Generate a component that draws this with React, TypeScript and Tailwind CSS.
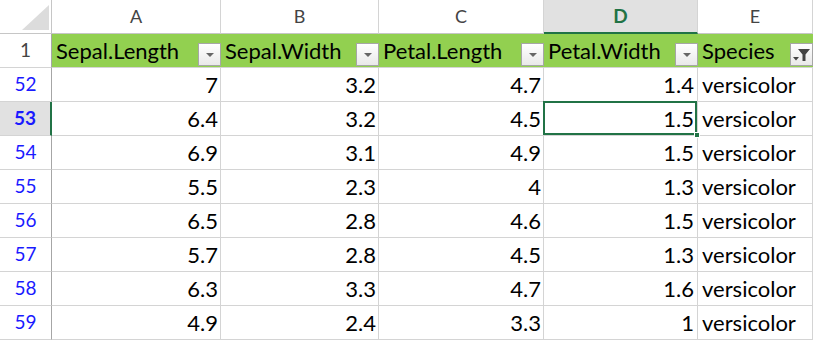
import React from "react";

const rows: [number, string, string, string, string][] = [
  [52, "7", "3.2", "4.7", "1.4"],
  [53, "6.4", "3.2", "4.5", "1.5"],
  [54, "6.9", "3.1", "4.9", "1.5"],
  [55, "5.5", "2.3", "4", "1.3"],
  [56, "6.5", "2.8", "4.6", "1.5"],
  [57, "5.7", "2.8", "4.5", "1.3"],
  [58, "6.3", "3.3", "4.7", "1.6"],
  [59, "4.9", "2.4", "3.3", "1"],
];

const headers = ["Sepal.Length", "Sepal.Width", "Petal.Length", "Petal.Width", "Species"];

function DropBtn({ filter }: { filter?: boolean }) {
  return (
    <div className="absolute right-0 bottom-[1px] w-[23px] h-[23px] border border-[#a6a6a6] bg-gradient-to-b from-white to-[#e9e9e9] flex items-center justify-center">
      {filter ? (
        <svg width="19" height="15" viewBox="0 0 19 15">
          <polygon points="6,2 18,2 13.5,7.5 13.5,14 10.5,14 10.5,7.5" fill="#444" />
          <polygon points="1,10 7,10 4,13.5" fill="#444" />
        </svg>
      ) : (
        <svg width="10" height="6" viewBox="0 0 10 6">
          <polygon points="1,1 9,1 5,5" fill="#666" />
        </svg>
      )}
    </div>
  );
}

export default function App() {
  const cell = "h-[34px] border-r border-b border-[#d4d4d4] bg-white";
  return (
    <div className="w-[813px] h-[342px] overflow-hidden bg-white font-['Lato','Noto_Sans',sans-serif]">
      <div className="grid grid-cols-[52px_169px_158px_165px_154px_115px]">
        {/* column header row */}
        <div className="h-[34px] border-r border-b border-[#c6c6c6] bg-white relative">
          <svg className="absolute left-[22px] top-[5px]" width="27" height="25" viewBox="0 0 27 25">
            <polygon points="0,25 27,25 27,0" fill="#dcdcdc" />
          </svg>
        </div>
        {["A", "B", "C", "D", "E"].map((l) =>
          l === "D" ? (
            <div
              key={l}
              className="h-[34px] border-r border-[#d4d4d4] border-b-2 border-b-[#217346] bg-[#e1e1e1] flex items-center justify-center text-[19px] font-bold text-[#217346]"
            >
              {l}
            </div>
          ) : (
            <div
              key={l}
              className="h-[34px] border-r border-[#d4d4d4] border-b border-b-[#c6c6c6] bg-white flex items-center justify-center text-[18px] text-[#444]"
            >
              {l}
            </div>
          )
        )}

        {/* header row 1 */}
        <div className="h-[34px] border-r border-r-[#a6a6a6] border-b border-b-[#d4d4d4] flex items-center justify-center text-[19px] text-[#444]">
          1
        </div>
        {headers.map((h, i) => (
          <div
            key={h}
            className="h-[34px] relative bg-[#92d050] border-b border-[#d4d4d4] flex items-center pl-[4px] text-[22px] text-black"
          >
            {h}
            <DropBtn filter={i === 4} />
          </div>
        ))}

        {rows.map(([n, a, b, c, d]) => {
          const sel = n === 53;
          return (
            <React.Fragment key={n}>
              {sel ? (
                <div className="h-[34px] border-b border-[#d4d4d4] border-r-2 border-r-[#217346] bg-[#e1e1e1] flex items-center justify-center text-[19px] font-bold text-[#1a1aff]">
                  {n}
                </div>
              ) : (
                <div className="h-[34px] border-b border-[#d4d4d4] border-r border-r-[#a6a6a6] bg-white flex items-center justify-center text-[19px] text-[#1a1aff]">
                  {n}
                </div>
              )}
              {[a, b, c].map((v, j) => (
                <div key={j} className={`${cell} flex items-center justify-end pr-[2px] text-[22px] text-black`}>
                  {v}
                </div>
              ))}
              <div className={`${cell} relative flex items-center justify-end pr-[3px] text-[22px] text-black`}>
                {d}
                {sel && (
                  <>
                    <div className="absolute -left-px -top-px right-0 bottom-0 border-2 border-[#217346]" />
                    <div className="absolute -right-[3px] -bottom-[3px] w-[6px] h-[6px] bg-[#217346] border border-white z-10" />
                  </>
                )}
              </div>
              <div className={`${cell} flex items-center pl-[4px] text-[22px] text-black`}>versicolor</div>
            </React.Fragment>
          );
        })}
      </div>
    </div>
  );
}
